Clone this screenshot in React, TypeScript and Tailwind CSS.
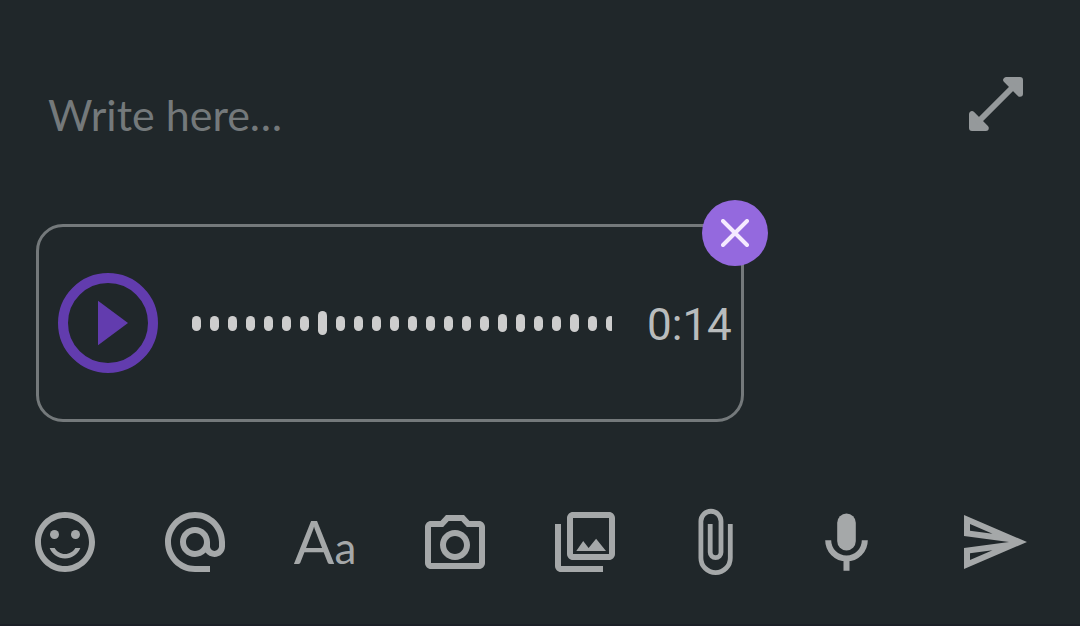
import { ReactNode, useState } from 'react';

const levels = [
  15, 15, 15, 15, 15, 15, 15, 24, 15, 15, 15, 15,
  15, 15, 15, 15, 15, 18, 18, 15, 15, 18, 15, 15,
];

const barHeights: Record<number, string> = {
  15: 'h-[15px]',
  18: 'h-[18px]',
  24: 'h-6',
};

function Icon({ children }: { children: ReactNode }) {
  return (
    <svg viewBox="0 0 24 24" className="w-[72px] h-[72px]" fill="currentColor" aria-hidden="true">
      {children}
    </svg>
  );
}

function ToolButton({ label, children }: { label: string; children: ReactNode }) {
  return (
    <button
      type="button"
      aria-label={label}
      className="flex w-[72px] h-[72px] shrink-0 items-center justify-center text-[#a5a8a9]"
    >
      {children}
    </button>
  );
}

function Composer() {
  const [message, setMessage] = useState('');

  return (
    <div className="flex items-start justify-between gap-6 pl-12 pr-[57px]">
      <textarea
        rows={1}
        aria-label="Message"
        placeholder="Write here…"
        value={message}
        onChange={(e) => setMessage(e.target.value)}
        className="mt-2 h-[60px] min-w-0 flex-1 resize-none overflow-hidden bg-transparent text-[43px] leading-[60px] text-[#c8cacb] outline-none placeholder:text-[#74797b]"
      />
      <button type="button" aria-label="Expand editor" className="shrink-0 text-[#95999b]">
        <svg viewBox="0 0 54 54" className="w-[54px] h-[54px]" aria-hidden="true">
          <g fill="currentColor" stroke="currentColor" strokeWidth="6" strokeLinejoin="round">
            <path d="M37.2 3H51v13.8z" />
            <path d="M3 37.2V51h13.8z" />
          </g>
          <path d="M10 44 44 10" stroke="currentColor" strokeWidth="6" />
        </svg>
      </button>
    </div>
  );
}

function VoiceMessage() {
  return (
    <div className="relative flex w-fit items-center rounded-[27px] border-3 border-[#74797b] py-[46px] pl-[19px] pr-[9px]">
      <button type="button" aria-label="Play voice message" className="shrink-0 text-[#623cae]">
        <svg viewBox="0 0 100 100" className="w-[100px] h-[100px]" aria-hidden="true">
          <circle cx="50" cy="50" r="45" fill="none" stroke="currentColor" strokeWidth="10" />
          <path d="M40 27.7 70 50 40 72.3z" fill="currentColor" />
        </svg>
      </button>

      <div className="ml-[34px] flex w-[420px] items-center gap-[9px] overflow-hidden">
        {levels.map((level, i) => (
          <span key={i} className={`w-[9px] shrink-0 rounded-full bg-[#cdcdcd] ${barHeights[level]}`} />
        ))}
      </div>

      <time className="ml-[35px] pt-1 font-[Roboto,sans-serif] text-[44px] leading-[52px] text-[#b9bcbd]">
        0:14
      </time>

      <button
        type="button"
        aria-label="Remove voice message"
        className="absolute -top-[27px] -right-[27px] flex w-[66px] h-[66px] items-center justify-center rounded-full bg-[#9469de] text-[#f5eaff]"
      >
        <svg viewBox="0 0 28 28" className="w-7 h-7" aria-hidden="true">
          <path d="M2 2 26 26M26 2 2 26" stroke="currentColor" strokeWidth="4" strokeLinecap="round" />
        </svg>
      </button>
    </div>
  );
}

function Toolbar() {
  return (
    <div className="flex items-center pl-[29px] pr-[50px]">
      <div className="flex gap-[58px]">
        <ToolButton label="Emoji">
          <Icon>
            <circle cx="15.5" cy="9.5" r="1.5" />
            <circle cx="8.5" cy="9.5" r="1.5" />
            <path d="M12 16c-1.48 0-2.75-.81-3.45-2H6.88c.8 2.05 2.79 3.5 5.12 3.5s4.32-1.45 5.12-3.5h-1.67c-.69 1.19-1.97 2-3.45 2zM12 2C6.47 2 2 6.48 2 12s4.47 10 10 10 10-4.48 10-10S17.52 2 12 2zm0 18c-4.42 0-8-3.58-8-8s3.58-8 8-8 8 3.58 8 8-3.58 8-8 8z" />
          </Icon>
        </ToolButton>
        <ToolButton label="Mention">
          <Icon>
            <path d="M12 2C6.48 2 2 6.48 2 12s4.48 10 10 10h5v-2h-5c-4.34 0-8-3.66-8-8s3.66-8 8-8 8 3.66 8 8v1.43c0 .79-.71 1.57-1.5 1.57s-1.5-.78-1.5-1.57V12c0-2.76-2.24-5-5-5s-5 2.24-5 5 2.24 5 5 5c1.38 0 2.64-.56 3.54-1.47.65.89 1.77 1.47 2.96 1.47 1.97 0 3.5-1.6 3.5-3.57V12c0-5.52-4.48-10-10-10zm0 13c-1.66 0-3-1.34-3-3s1.34-3 3-3 3 1.34 3 3-1.34 3-3 3z" />
          </Icon>
        </ToolButton>
        <ToolButton label="Text format">
          <span className="flex items-baseline pt-1 leading-[72px]">
            <span className="text-[60px]">A</span>
            <span className="text-[44px]">a</span>
          </span>
        </ToolButton>
        <ToolButton label="Camera">
          <Icon>
            <path d="M20 5h-3.17L15 3H9L7.17 5H4c-1.1 0-2 .9-2 2v12c0 1.1.9 2 2 2h16c1.1 0 2-.9 2-2V7c0-1.1-.9-2-2-2zm0 14H4V7h4.05l1.83-2h4.24l1.83 2H20v12zM12 8c-2.76 0-5 2.24-5 5s2.24 5 5 5 5-2.24 5-5-2.24-5-5-5zm0 8c-1.65 0-3-1.35-3-3s1.35-3 3-3 3 1.35 3 3-1.35 3-3 3z" />
          </Icon>
        </ToolButton>
        <ToolButton label="Gallery">
          <Icon>
            <path d="M20 4v12H8V4h12m0-2H8c-1.1 0-2 .9-2 2v12c0 1.1.9 2 2 2h12c1.1 0 2-.9 2-2V4c0-1.1-.9-2-2-2zM2 6v14c0 1.1.9 2 2 2h14v-2H4V6H2z" />
            <path d="M9.1 15 11.4 11.7 13.2 14 15.7 10.9 19 15z" />
          </Icon>
        </ToolButton>
        <ToolButton label="Attach file">
          <Icon>
            <path
              d="M17.1 6v11.3a4.9 4.9 0 0 1-9.8 0V5.1a3.35 3.35 0 0 1 6.7 0v10.3a1.8 1.8 0 0 1-3.6 0V6"
              fill="none"
              stroke="currentColor"
              strokeWidth="1.6"
            />
          </Icon>
        </ToolButton>
        <ToolButton label="Record voice">
          <Icon>
            <rect x="9.4" y="2.5" width="6.2" height="12.3" rx="3.1" />
            <path
              d="M6.4 11.4a6.1 6.1 0 0 0 12.2 0M12.5 17.5v4.1"
              fill="none"
              stroke="currentColor"
              strokeWidth="2"
            />
          </Icon>
        </ToolButton>
      </div>
      <div className="ml-auto">
        <ToolButton label="Send">
          <Icon>
            <path d="M4.01 6.03l7.51 3.22-7.52-1 .01-2.22m7.5 8.72L4 17.97v-2.22l7.51-1M2.01 3L2 10l15 2-15 2 .01 7L23 12 2.01 3z" />
          </Icon>
        </ToolButton>
      </div>
    </div>
  );
}

export default function App() {
  return (
    <main className="min-h-screen border-b-2 border-[#1c2027] bg-[#20272a] pt-[77px] pb-[46px] font-[Lato,sans-serif]">
      <Composer />
      <div className="mt-[79px] ml-9">
        <VoiceMessage />
      </div>
      <div className="mt-[84px]">
        <Toolbar />
      </div>
    </main>
  );
}
